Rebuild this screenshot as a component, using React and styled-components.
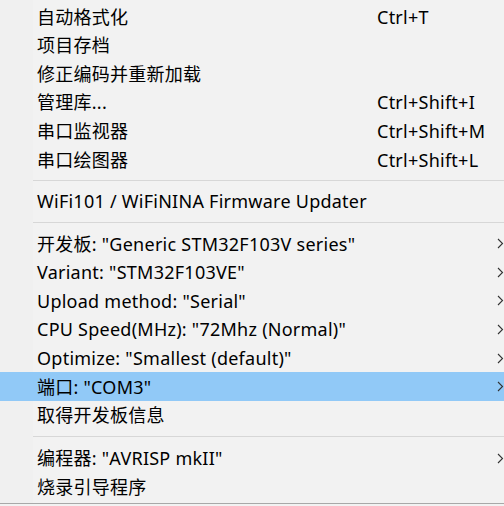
import React from "react";
import styled, { createGlobalStyle } from "styled-components";

const Global = createGlobalStyle`
  html, body { margin: 0; padding: 0; background: #f2f2f2; overflow: hidden; }
  body { width: 504px; height: 506px; }
`;

const Menu = styled.div`
  position: relative;
  width: 520px;
  height: 504px;
  box-sizing: border-box;
  padding-top: 2.2px;
  background: linear-gradient(to right, #f0f0f0 0, #f0f0f0 33px, #f2f2f2 33px);
  border-bottom: 1px solid #a8a8a8;
  font-family: "Noto Sans", "Noto Sans CJK SC", sans-serif;
  font-size: 18px;
  letter-spacing: 0.25px;
  color: #000;
  display: flex;
  flex-direction: column;
`;

const Row = styled.div`
  height: 28.67px;
  display: grid;
  grid-template-columns: 37px 340px 1fr 23px;
  align-items: center;
  background: ${(p) => (p.$active ? "#91c9f7" : "transparent")};
  white-space: nowrap;
`;

const Label = styled.span`
  grid-column: 2;
  line-height: 1;
`;

const Shortcut = styled.span`
  grid-column: 3;
  line-height: 1;
`;

const Arrow = styled.span`
  grid-column: 4;
  display: flex;
  align-items: center;
`;

const Separator = styled.div`
  height: ${(p) => p.$h || 13}px;
  display: flex;
  align-items: center;
  padding-left: 33px;
  &::after {
    content: "";
    flex: 1;
    height: 1px;
    background: #d7d7d7;
  }
`;

const Chevron = () => (
  <svg width="7" height="11" viewBox="0 0 7 11">
    <polyline points="1,1 5.5,5.5 1,10" fill="none" stroke="#333" strokeWidth="1.1" />
  </svg>
);

const Item = ({ label, shortcut, sub, active }) => (
  <Row $active={active}>
    <Label>{label}</Label>
    {shortcut && <Shortcut>{shortcut}</Shortcut>}
    {sub && (
      <Arrow>
        <Chevron />
      </Arrow>
    )}
  </Row>
);

export default function App() {
  return (
    <>
      <Global />
      <Menu>
        <Item label="自动格式化" shortcut="Ctrl+T" />
        <Item label="项目存档" />
        <Item label="修正编码并重新加载" />
        <Item label="管理库..." shortcut="Ctrl+Shift+I" />
        <Item label="串口监视器" shortcut="Ctrl+Shift+M" />
        <Item label="串口绘图器" shortcut="Ctrl+Shift+L" />
        <Separator $h={13} />
        <Item label="WiFi101 / WiFiNINA Firmware Updater" />
        <Separator $h={13.4} />
        <Item label={'开发板: "Generic STM32F103V series"'} sub />
        <Item label={'Variant: "STM32F103VE"'} sub />
        <Item label={'Upload method: "Serial"'} sub />
        <Item label={'CPU Speed(MHz): "72Mhz (Normal)"'} sub />
        <Item label={'Optimize: "Smallest (default)"'} sub />
        <Item label={'端口: "COM3"'} sub active />
        <Item label="取得开发板信息" />
        <Separator $h={14.4} />
        <Item label={'编程器: "AVRISP mkII"'} sub />
        <Item label="烧录引导程序" />
      </Menu>
    </>
  );
}
